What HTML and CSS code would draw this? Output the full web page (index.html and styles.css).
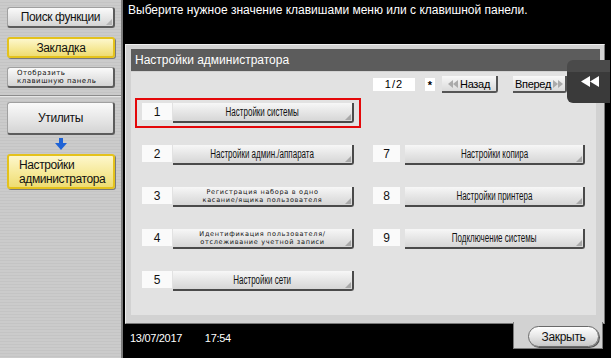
FILE: index.html
```html
<!DOCTYPE html>
<html lang="ru">
<head>
    <meta charset="UTF-8">
    <meta name="viewport" content="width=device-width, initial-scale=1.0">
    <title>Настройки администратора</title>
    <link rel="stylesheet" href="styles.css">
</head>
<body>
<div class="screen">

    <!-- левая панель -->
    <aside class="sidebar">
        <div class="side-top">
            <div class="side-btn grey corner"><span>Поиск функции</span></div>
            <div class="side-btn yellow"><span>Закладка</span></div>
            <div class="side-btn grey small"><span>Отобразить<br>клавишную панель</span></div>
        </div>
        <div class="side-nav">
            <div class="side-btn grey tall"><span>Утилиты</span></div>
            <svg class="down-arrow" width="14" height="12" viewBox="0 0 14 12">
                <rect x="5" y="0" width="4" height="5" fill="#1f63d6"/>
                <polygon points="1,5 13,5 7,12" fill="#1f63d6"/>
            </svg>
            <div class="side-btn yellow tall left"><span>Настройки<br>администратора</span></div>
        </div>
    </aside>

    <main class="main">
        <div class="prompt">Выберите нужное значение клавишами меню или с клавишной панели.</div>

        <section class="panel">
            <div class="panel-title">Настройки администратора</div>
            <div class="panel-body">
                <div class="pager">
                    <div class="page-num">1/2</div>
                    <div class="page-star">*</div>
                    <div class="page-btn">
                        <svg width="10" height="8" viewBox="0 0 10 8"><polygon points="5,0 5,8 0,4" fill="#aaa"/><polygon points="10,0 10,8 5,4" fill="#aaa"/></svg>
                        <span>Назад</span>
                    </div>
                    <div class="page-btn next">
                        <span>Вперед</span>
                        <svg width="10" height="8" viewBox="0 0 10 8"><polygon points="0,0 0,8 5,4" fill="#aaa"/><polygon points="5,0 5,8 10,4" fill="#aaa"/></svg>
                    </div>
                </div>

                <div class="menu-grid">
                    <div class="menu-item selected">
                        <div class="num">1</div>
                        <div class="menu-btn"><span class="label">Настройки системы</span></div>
                    </div>
                    <div class="menu-item">
                        <div class="num">2</div>
                        <div class="menu-btn"><span class="label">Настройки админ./аппарата</span></div>
                    </div>
                    <div class="menu-item">
                        <div class="num">3</div>
                        <div class="menu-btn"><span class="label tiny">Регистрация набора в одно<br>касание/ящика пользователя</span></div>
                    </div>
                    <div class="menu-item">
                        <div class="num">4</div>
                        <div class="menu-btn"><span class="label tiny">Идентификация пользователя/<br>отслеживание учетной записи</span></div>
                    </div>
                    <div class="menu-item">
                        <div class="num">5</div>
                        <div class="menu-btn"><span class="label">Настройки сети</span></div>
                    </div>

                    <div class="menu-item right row-2">
                        <div class="num">7</div>
                        <div class="menu-btn"><span class="label">Настройки копира</span></div>
                    </div>
                    <div class="menu-item right row-3">
                        <div class="num">8</div>
                        <div class="menu-btn"><span class="label">Настройки принтера</span></div>
                    </div>
                    <div class="menu-item right row-4">
                        <div class="num">9</div>
                        <div class="menu-btn"><span class="label">Подключение системы</span></div>
                    </div>
                </div>
            </div>

            <div class="collapse-tab">
                <svg width="18" height="11" viewBox="0 0 18 11"><polygon points="9,0 9,11 0,5.5" fill="#fff"/><polygon points="18,0 18,11 9,5.5" fill="#fff"/></svg>
            </div>

            <div class="close-tab">
                <div class="close-btn"><span>Закрыть</span></div>
            </div>
        </section>

        <div class="status">
            <span>13/07/2017</span>
            <span class="time">17:54</span>
        </div>
    </main>
</div>
</body>
</html>
```

FILE: styles.css
```css
* {
    box-sizing: border-box;
}

body {
    margin: 0;
    width: 611px;
    height: 358px;
    overflow: hidden;
    background-color: #000;
    font-family: "Liberation Sans", Arial, sans-serif;
}

.screen {
    display: flex;
    height: 358px;
}

/* левая панель */

.sidebar {
    width: 123px;
    flex: none;
    border-right: 2px solid #7c7c7c;
    background-color: #c9c9c9;
    background-image: repeating-linear-gradient(to bottom, #cbcbcb 0, #cbcbcb 2px, #c4c4c4 2px, #c4c4c4 3px);
}

.side-top {
    display: flex;
    flex-direction: column;
    gap: 9px;
    padding: 7px 6px 7px 7px;
    border-bottom: 1px solid #8c8c8c;
    box-shadow: 0 1px 0 #e6e6e6;
}

.side-nav {
    display: flex;
    flex-direction: column;
    align-items: center;
    padding: 6px 6px 0 7px;
}

.side-btn {
    position: relative;
    width: 108px;
    height: 21px;
    display: flex;
    align-items: center;
    justify-content: center;
    border: 1px solid #a0a0a0;
    border-right: 2px solid #5c5c5c;
    border-bottom: 2px solid #5c5c5c;
    border-radius: 3px;
    font-size: 12px;
    letter-spacing: -0.4px;
    color: #111;
}

.side-btn.grey {
    background: linear-gradient(to bottom, #fafafa, #e4e4e4 60%, #d4d4d4);
}

.side-btn.yellow {
    border: 2px solid #e4c21c;
    box-shadow: 1px 1px 0 #7a7a7a;
    background: linear-gradient(to bottom, #fdf7cc, #f6e998 55%, #eedc72);
}

.side-btn.small {
    justify-content: flex-start;
    padding-left: 9px;
    font-family: "DejaVu Sans", sans-serif;
    font-size: 7px;
    line-height: 8px;
    letter-spacing: 0.5px;
}

.side-btn.tall {
    height: 33px;
}

.side-nav .side-btn.yellow {
    height: 35px;
}

.side-btn.left {
    justify-content: flex-start;
    padding-left: 10px;
    line-height: 14px;
}

.side-btn.corner::after {
    content: "";
    position: absolute;
    right: 1px;
    bottom: 1px;
    border-left: 6px solid transparent;
    border-bottom: 6px solid #b4b4b4;
}

.down-arrow {
    margin: 3px 0 4px;
}

/* основная часть */

.main {
    flex: 1;
    display: flex;
    flex-direction: column;
    position: relative;
}

.prompt {
    height: 44px;
    padding: 3px 0 0 5px;
    color: #fff;
    font-size: 12px;
    line-height: 14px;
}

.panel {
    position: relative;
    width: 480px;
    height: 280px;
    margin-left: 2px;
    padding: 4px 8px 8px 5px;
    border: 1px solid #7a7a7a;
    border-top-color: #efefef;
    border-left-color: #efefef;
    background-color: #d2d2d2;
}

.panel-title {
    height: 22px;
    margin-right: -4px;
    padding-left: 4px;
    background-color: #5c5c5c;
    color: #fff;
    font-size: 12px;
    line-height: 22px;
}

.panel-body {
    height: 243px;
    margin-top: 1px;
    padding: 4px 0 0 4px;
    background-color: #e2e2e2;
}

.pager {
    display: flex;
    align-items: center;
    height: 17px;
    margin-left: 238px;
    margin-bottom: 5px;
    font-size: 11px;
}

.page-num {
    width: 42px;
    height: 13px;
    background-color: #fff;
    text-align: center;
    line-height: 13px;
    letter-spacing: 1px;
}

.page-star {
    width: 10px;
    height: 13px;
    margin-left: 10px;
    background-color: #fff;
    text-align: center;
    line-height: 15px;
    font-weight: bold;
}

.page-btn {
    display: flex;
    align-items: center;
    justify-content: center;
    gap: 2px;
    width: 56px;
    height: 17px;
    margin-left: 7px;
    border-right: 2px solid #555;
    border-bottom: 2px solid #555;
    border-radius: 0 0 3px 0;
    background: linear-gradient(to bottom, #f8f8f8, #dadada);
    letter-spacing: -0.3px;
}

.page-btn.next {
    width: 54px;
    margin-left: 15px;
}

.menu-grid {
    display: grid;
    grid-template-columns: 226px 226px;
    grid-auto-rows: 30px;
    column-gap: 5px;
    row-gap: 12px;
}

.menu-item {
    grid-column: 1;
    display: flex;
    align-items: flex-start;
    gap: 1px;
    padding: 3px 5px;
    border: 2px solid transparent;
}

.menu-item.selected {
    border-color: #e4080a;
}

.menu-item.right {
    grid-column: 2;
    gap: 5px;
}

.row-2 { grid-row: 2; }
.row-3 { grid-row: 3; }
.row-4 { grid-row: 4; }

.num {
    width: 30px;
    height: 17px;
    flex: none;
    background-color: #fafafa;
    text-align: center;
    font-size: 12px;
    line-height: 18px;
    color: #111;
}

.menu-item.right .num {
    width: 27px;
}

.menu-btn {
    position: relative;
    width: 181px;
    height: 20px;
    display: flex;
    align-items: center;
    justify-content: center;
    border-right: 2px solid #4a4a4a;
    border-bottom: 2px solid #4a4a4a;
    border-radius: 0 0 3px 0;
    background: linear-gradient(to bottom, #f7f7f7, #e6e6e6 50%, #d6d6d6);
}

.menu-item.right .menu-btn {
    width: 182px;
}

.menu-btn::after {
    content: "";
    position: absolute;
    right: 1px;
    bottom: 1px;
    border-left: 6px solid transparent;
    border-bottom: 6px solid #a8a8a8;
}

.label {
    display: inline-block;
    white-space: nowrap;
    font-size: 12.5px;
    color: #111;
    transform: scaleX(0.64);
}

.label.tiny {
    font-family: "DejaVu Sans", sans-serif;
    font-size: 6.5px;
    line-height: 8px;
    letter-spacing: 0.7px;
    text-align: center;
    transform: none;
}

.collapse-tab {
    position: absolute;
    top: 15px;
    right: -6px;
    width: 43px;
    height: 43px;
    display: flex;
    align-items: center;
    justify-content: center;
    padding-left: 2px;
    border-radius: 6px 0 0 6px;
    background: linear-gradient(to bottom, #4a4a4a 0, #4a4a4a 12px, #3a3a3a 12px);
}

.close-tab {
    position: absolute;
    top: 100%;
    left: 387px;
    width: 90px;
    height: 27px;
    margin-top: -1px;
    padding: 4px 0 0 14px;
    border: 1px solid #7a7a7a;
    border-top: none;
    background-color: #d2d2d2;
}

.close-btn {
    width: 71px;
    height: 21px;
    display: flex;
    align-items: center;
    justify-content: center;
    border: 1px solid #6a6a6a;
    border-radius: 11px;
    background: linear-gradient(to bottom, #ffffff, #e6e6e6 50%, #c8c8c8);
    box-shadow: 1px 1px 0 #555;
    font-size: 12px;
    letter-spacing: -0.3px;
    color: #111;
}

.status {
    flex: 1;
    padding: 8px 0 0 7px;
    color: #fff;
    font-size: 11px;
    letter-spacing: -0.3px;
}

.status .time {
    margin-left: 20px;
}
```
